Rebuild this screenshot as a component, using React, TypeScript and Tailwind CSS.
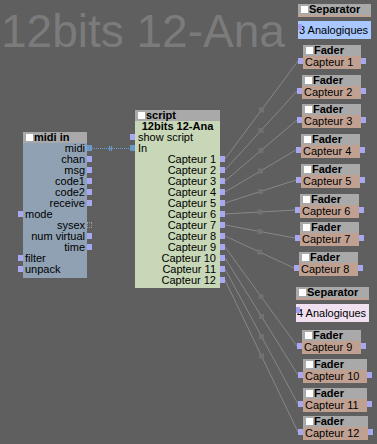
const font = "font-['Liberation_Sans',Arial,sans-serif]";

const faders = [
  { x: 303, y: 45, w: 58 },
  { x: 302, y: 75, w: 59 },
  { x: 302, y: 104, w: 59 },
  { x: 301, y: 134, w: 59 },
  { x: 301, y: 164, w: 59 },
  { x: 300, y: 194, w: 59 },
  { x: 300, y: 222, w: 59 },
  { x: 299, y: 252, w: 59 },
  { x: 302, y: 330, w: 59 },
  { x: 303, y: 359, w: 64 },
  { x: 303, y: 388, w: 64 },
  { x: 303, y: 416, w: 65 },
];

const midiRows: [string, "l" | "r", string?][] = [
  ["midi", "r", "link"],
  ["chan", "r"],
  ["msg", "r"],
  ["code1", "r"],
  ["code2", "r"],
  ["receive", "r"],
  ["mode", "l"],
  ["sysex", "r", "off"],
  ["num virtual", "r"],
  ["time", "r"],
  ["filter", "l"],
  ["unpack", "l"],
];

function Port({ side, kind }: { side: "l" | "r"; kind?: string }) {
  const pos = side === "r" ? "right-[-5px]" : "left-[-5px]";
  const look =
    kind === "link"
      ? "bg-[#6a98c8]"
      : kind === "off"
      ? "border border-dotted border-[#9a9a9a]"
      : "bg-[#a8a8f0]";
  return <span className={`absolute top-[2px] h-[6px] w-[5px] ${pos} ${look}`} />;
}

function Header({ title }: { title: string }) {
  return (
    <div className="flex h-[11px] items-center gap-[1px] bg-[#a9a9a9] pl-[3px]">
      <span className="h-[7px] w-[7px] bg-white" />
      <span className="whitespace-nowrap text-[11px] font-bold leading-none text-black">{title}</span>
    </div>
  );
}

function Fader({ n, x, y, w }: { n: number; x: number; y: number; w: number }) {
  return (
    <div className="absolute" style={{ left: x, top: y, width: w }}>
      <Header title="Fader" />
      <div className="relative h-[13px] whitespace-nowrap bg-[#c0a090] pl-[2px] text-[11px] leading-[13px] text-black">
        Capteur {n}
        <span className="absolute left-[-5px] top-[2px] h-[6px] w-[5px] bg-[#a8a8f0]" />
        <span className="absolute right-[-5px] top-[2px] h-[6px] w-[5px] bg-[#a8a8f0]" />
      </div>
    </div>
  );
}

function Separator({ x, y, label, tone }: { x: number; y: number; label: string; tone: string }) {
  return (
    <div className="absolute flex w-[73px] flex-col" style={{ left: x, top: y }}>
      <Header title="Separator" />
      <div className="h-[2px] bg-[#c0a090]" />
      <div className={`relative mt-[4px] h-[18px] whitespace-nowrap pl-[1px] text-[11px] leading-[18px] text-black ${tone}`}>
        {label}
        <span className="absolute left-0 top-[3px] h-[6px] w-[4px] bg-[#a0a0f0]" />
      </div>
    </div>
  );
}

export default function App() {
  return (
    <div className={`relative h-[444px] w-[377px] overflow-hidden bg-[#5f5f5f] ${font}`}>
      <div className="absolute left-[1px] top-[8px] text-[46px] leading-[46px] text-[#7b7b7b]">12bits 12-Ana</div>

      <svg className="absolute inset-0" width="377" height="444">
        {faders.map((f, i) => {
          const x1 = 225;
          const y1 = 159 + 11 * i;
          const x2 = f.x - 5;
          const y2 = f.y + 16;
          const mx = (x1 + x2) / 2;
          const my = (y1 + y2) / 2;
          return (
            <g key={i}>
              <line x1={x1} y1={y1} x2={x2} y2={y2} stroke="#878787" strokeWidth="1" />
              <rect x={mx - 2.5} y={my - 2.5} width="5" height="5" fill="#717171" />
            </g>
          );
        })}
        <line x1="92" y1="148.5" x2="130" y2="148.5" stroke="#6a9ad0" strokeDasharray="1 1" />
        <line x1="109.5" y1="146" x2="109.5" y2="151" stroke="#6a9ad0" />
        <line x1="111.5" y1="146" x2="111.5" y2="151" stroke="#6a9ad0" />
      </svg>

      {/* midi in */}
      <div className="absolute left-[23px] top-[132px] flex w-[64px] flex-col bg-[#8fa1b3] pb-[3px]">
        <Header title="midi in" />
        {midiRows.map(([label, side, kind]) => (
          <div
            key={label}
            className={`relative h-[11px] whitespace-nowrap px-[2px] text-[11px] leading-[11px] text-black ${side === "r" ? "text-right" : "text-left"}`}
          >
            {label}
            <Port side={side} kind={kind} />
          </div>
        ))}
      </div>

      {/* script */}
      <div className="absolute left-[135px] top-[110px] flex w-[85px] flex-col bg-[#c7d7b7] pb-[2px]">
        <Header title="script" />
        <div className="h-[11px] text-center text-[11px] font-bold leading-[11px] text-black">12bits 12-Ana</div>
        <div className="relative h-[11px] px-[3px] text-[11px] leading-[11px] text-black">
          show script
          <Port side="l" />
        </div>
        <div className="relative h-[11px] px-[3px] text-[11px] leading-[11px] text-black">
          In
          <Port side="l" kind="link" />
        </div>
        {faders.map((_, i) => (
          <div key={i} className="relative h-[11px] pr-[4px] text-right text-[11px] leading-[11px] text-black">
            Capteur {i + 1}
            <Port side="r" />
          </div>
        ))}
      </div>

      <Separator x={298} y={4} label="3 Analogiques" tone="bg-[#a8c8ff]" />
      <Separator x={296} y={287} label="4 Analogiques" tone="bg-[#f0e0f0]" />

      {faders.map((f, i) => (
        <Fader key={i} n={i + 1} x={f.x} y={f.y} w={f.w} />
      ))}
    </div>
  );
}
